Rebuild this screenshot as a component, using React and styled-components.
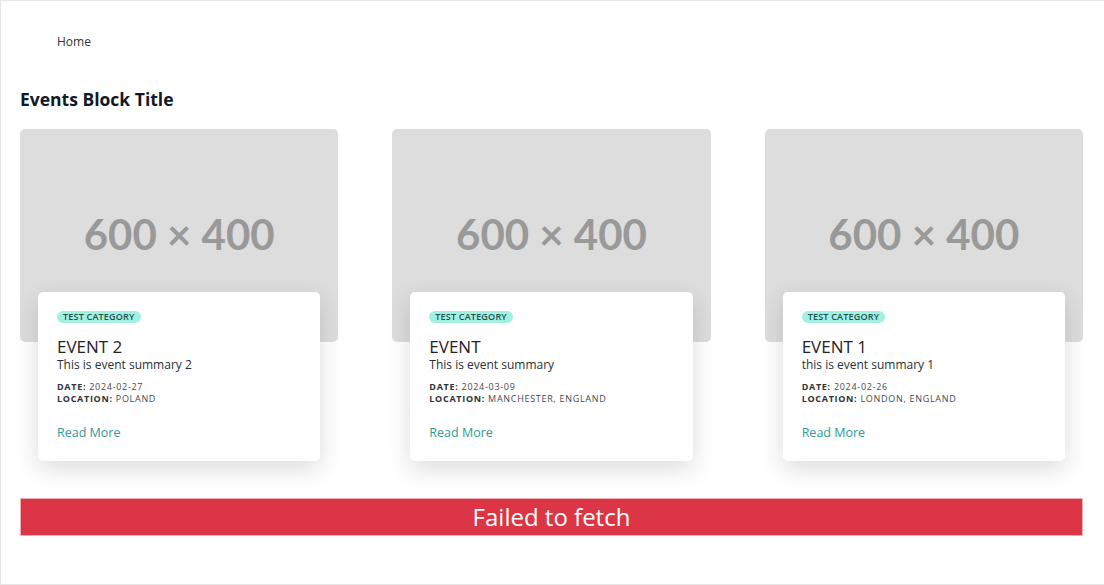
import React from 'react';
import styled, { createGlobalStyle } from 'styled-components';

const GlobalStyle = createGlobalStyle`
  html, body {
    margin: 0;
    padding: 0;
    background: #fff;
  }
  body {
    font-family: "Open Sans", "Noto Sans", sans-serif;
    color: #212529;
  }
`;

const events = [
  { id: 2, title: 'EVENT 2', summary: 'This is event summary 2', date: '2024-02-27', location: 'POLAND' },
  { id: 3, title: 'EVENT', summary: 'This is event summary', date: '2024-03-09', location: 'MANCHESTER, ENGLAND' },
  { id: 1, title: 'EVENT 1', summary: 'this is event summary 1', date: '2024-02-26', location: 'LONDON, ENGLAND' },
];

export default function App() {
  return (
    <Frame>
      <GlobalStyle />
      <Nav>
        <NavLink>Home</NavLink>
      </Nav>
      <Section>
        <BlockTitle>Events Block Title</BlockTitle>
        <Grid>
          {events.map(event => (
            <EventItem key={event.id}>
              <Placeholder>600 × 400</Placeholder>
              <Card>
                <Badge>Test Category</Badge>
                <EventTitle>{event.title}</EventTitle>
                <Summary>{event.summary}</Summary>
                <Meta>
                  <MetaLine><b>Date:</b> {event.date}</MetaLine>
                  <MetaLine><b>Location:</b> {event.location}</MetaLine>
                </Meta>
                <ReadMore href="#">Read More</ReadMore>
              </Card>
            </EventItem>
          ))}
        </Grid>
        <ErrorBar>Failed to fetch</ErrorBar>
      </Section>
    </Frame>
  );
}

const Frame = styled.div`
  box-sizing: border-box;
  height: 585px;
  border-top: 1px solid #e6e6e6;
  border-left: 1px solid #e6e6e6;
  border-bottom: 1px solid #e6e6e6;
`;

const Nav = styled.nav`
  display: flex;
  padding: 33px 0 0 56px;
`;

const NavLink = styled.span`
  font-size: 12px;
  line-height: 16px;
  color: #333;
`;

const Section = styled.section`
  padding: 0 21px 0 19px;
`;

const BlockTitle = styled.h2`
  margin: 37px 0 18px;
  font-size: 17.5px;
  line-height: 24px;
  font-weight: 700;
  color: #111827;
`;

const Grid = styled.div`
  display: grid;
  grid-template-columns: repeat(3, 1fr);
  column-gap: 54px;
`;

const EventItem = styled.article`
  display: flex;
  flex-direction: column;
`;

const Placeholder = styled.div`
  box-sizing: border-box;
  height: 213px;
  padding-bottom: 4px;
  border-radius: 5px;
  background: #dddddd;
  display: flex;
  align-items: center;
  justify-content: center;
  font-family: Lato, "Open Sans", sans-serif;
  font-size: 42px;
  font-weight: 700;
  color: #999;
`;

const Card = styled.div`
  position: relative;
  display: flex;
  flex-direction: column;
  align-items: flex-start;
  margin: -50px 18px 0;
  padding: 19px;
  background: #fff;
  border-radius: 5px;
  box-shadow: 0 8px 24px rgba(0, 0, 0, 0.14);
`;

const Badge = styled.span`
  height: 12px;
  padding: 0 6px;
  border-radius: 6px;
  background: #a2f0e1;
  color: #23514d;
  font-size: 9px;
  font-weight: 600;
  line-height: 12px;
  letter-spacing: 0.2px;
  text-transform: uppercase;
`;

const EventTitle = styled.h3`
  margin: 13px 0 0;
  font-size: 17px;
  line-height: 21px;
  font-weight: 400;
  color: #1f2229;
`;

const Summary = styled.p`
  margin: 0;
  font-size: 12px;
  line-height: 16px;
  color: #2b2f36;
`;

const Meta = styled.div`
  margin-top: 8px;
`;

const MetaLine = styled.div`
  font-size: 9px;
  line-height: 12px;
  letter-spacing: 0.7px;
  color: #444a52;
  text-transform: uppercase;

  b {
    color: #2e323a;
  }
`;

const ReadMore = styled.a`
  margin-top: 19px;
  font-size: 12.5px;
  font-weight: 500;
  line-height: 18px;
  color: #2f9a96;
  text-decoration: none;
`;

const ErrorBar = styled.div`
  box-sizing: border-box;
  margin-top: 37px;
  height: 38px;
  border: 1px solid #f1aeb5;
  background: #dc3545;
  color: #fff;
  font-size: 24px;
  line-height: 36px;
  text-align: center;
`;
